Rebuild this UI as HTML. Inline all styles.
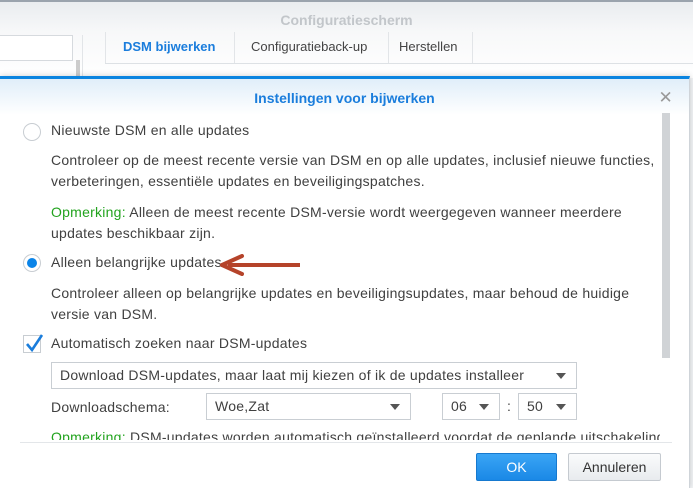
<!DOCTYPE html>
<html><head><meta charset="utf-8"><style>
*{box-sizing:border-box;margin:0;padding:0}
body{width:693px;height:488px;overflow:hidden;position:relative;font-family:"Liberation Sans",sans-serif;font-size:14px;letter-spacing:0.25px;color:#404040;background:#f3f5f7}
.top{position:absolute;left:0;top:0;width:693px;height:78px;background:linear-gradient(#e9ecef,#f7f8f9 30px,#fff);border-top:2px solid #9aa3ad}
.title{position:absolute;top:10px;left:0;width:693px;text-align:center;font-weight:bold;color:#c2c6ca;font-size:14px;letter-spacing:0}
.search{position:absolute;left:-2px;top:35px;width:75px;height:26px;border:1px solid #d6dade;background:#fff}
.vs{position:absolute;left:82px;top:35px;width:1px;height:43px;background:#e2e5e8}
.tabs{position:absolute;left:105px;top:32px;height:32px;width:588px;border-bottom:1px solid #dde1e5}
.tab{position:absolute;top:0;height:31px;line-height:30px;font-size:13px;letter-spacing:0;color:#444;border-right:1px solid #e2e5e8}
.dlg{position:absolute;left:0;top:76px;width:690px;height:412px;background:#fff;border-top:3px solid #0a84e0;border-right:1px solid #cfd4d9;box-shadow:0 0 6px rgba(0,0,0,.2)}
.dh{height:36px;background:linear-gradient(#e0eef9,#fff);text-align:center;line-height:38px;font-weight:bold;color:#1a7ddc;font-size:14px;letter-spacing:0}
.x{position:absolute;right:16px;top:9px;color:#999;font-size:17px}
.p{position:absolute;left:51px;line-height:21px;white-space:nowrap}
.radio{position:absolute;left:23px;width:18px;height:18px;border-radius:50%;border:1px solid #c8cdd2;background:#fff}
.g{color:#22a31e}
.sel{position:absolute;height:27px;border:1px solid #c9ced3;background:#fff;line-height:25px;padding-left:8px}
.arr{position:absolute;right:10px;top:10px;width:0;height:0;border-left:5px solid transparent;border-right:5px solid transparent;border-top:6px solid #555}
.btn{position:absolute;height:28px;line-height:26px;text-align:center;border-radius:2px;letter-spacing:0}
</style></head><body>
<div class="top"><div class="title">Configuratiescherm</div></div>
<div class="search"></div>
<div style="position:absolute;left:76px;top:60px;width:4px;height:18px;background:#ccc"></div>
<div class="vs"></div>
<div class="tabs">
<div class="tab" style="left:0;width:130px;padding-left:17px;color:#1a7ddc;font-weight:bold;border-left:1px solid #e2e5e8">DSM bijwerken</div>
<div class="tab" style="left:130px;width:154px;padding-left:16px">Configuratieback-up</div>
<div class="tab" style="left:284px;width:84px;padding-left:10px">Herstellen</div>
</div>
<div class="dlg">
<div class="dh">Instellingen voor bijwerken</div>
<div class="x">✕</div>
<div style="position:absolute;left:662px;top:34px;width:8px;height:245px;background:#d0d3d6"></div>
<div class="radio" style="top:44px"></div>
<div class="p" style="top:41px">Nieuwste DSM en alle updates</div>
<div class="p" style="top:71px">Controleer op de meest recente versie van DSM en op alle updates, inclusief nieuwe functies,<br>verbeteringen, essentiële updates en beveiligingspatches.</div>
<div class="p" style="top:123px"><span class="g">Opmerking:</span> Alleen de meest recente DSM-versie wordt weergegeven wanneer meerdere<br>updates beschikbaar zijn.</div>
<div class="radio" style="top:175px"><div style="position:absolute;left:3px;top:3px;width:10px;height:10px;border-radius:50%;background:#0a84e8"></div></div>
<div class="p" style="top:173px">Alleen belangrijke updates</div>
<svg style="position:absolute;left:218px;top:175px" width="84" height="22"><path d="M82 11H10" stroke="#b5432a" stroke-width="4"/><path d="M4 11L24 2M4 11L24 20" stroke="#b5432a" stroke-width="4" stroke-linecap="round"/></svg>
<div class="p" style="top:204px">Controleer alleen op belangrijke updates en beveiligingsupdates, maar behoud de huidige<br>versie van DSM.</div>
<div style="position:absolute;left:23px;top:256px;width:18px;height:18px;border:1px solid #c8cdd2;background:#fff"></div>
<svg style="position:absolute;left:23px;top:253px" width="22" height="22"><path d="M4 12L9 18L19 3" stroke="#1a7ddc" stroke-width="2.6" fill="none"/></svg>
<div class="p" style="top:254px">Automatisch zoeken naar DSM-updates</div>
<div class="sel" style="left:51px;top:283px;width:526px">Download DSM-updates, maar laat mij kiezen of ik de updates installeer<div class="arr"></div></div>
<div class="p" style="top:318px">Downloadschema:</div>
<div class="sel" style="left:206px;top:314px;width:205px">Woe,Zat<div class="arr"></div></div>
<div class="sel" style="left:442px;top:314px;width:58px">06<div class="arr"></div></div>
<div class="p" style="left:507px;top:317px">:</div>
<div class="sel" style="left:518px;top:314px;width:59px">50<div class="arr"></div></div>
<div style="position:absolute;left:0;top:348px;width:660px;height:13px;overflow:hidden"><div class="p" style="top:0">
<span class="g">Opmerking:</span> DSM-updates worden automatisch geïnstalleerd voordat de geplande uitschakeling</div></div>
<div style="position:absolute;left:20px;top:363px;width:652px;height:1px;background:#e3e6e9"></div>
<div class="btn" style="left:476px;top:374px;width:81px;background:linear-gradient(#3aa5f5,#1a88e6);border:1px solid #1679cf;color:#fff">OK</div>
<div class="btn" style="left:568px;top:374px;width:93px;background:linear-gradient(#fafbfc,#e8ebee);border:1px solid #c5cad0;color:#333">Annuleren</div>
</div>
</body></html>
